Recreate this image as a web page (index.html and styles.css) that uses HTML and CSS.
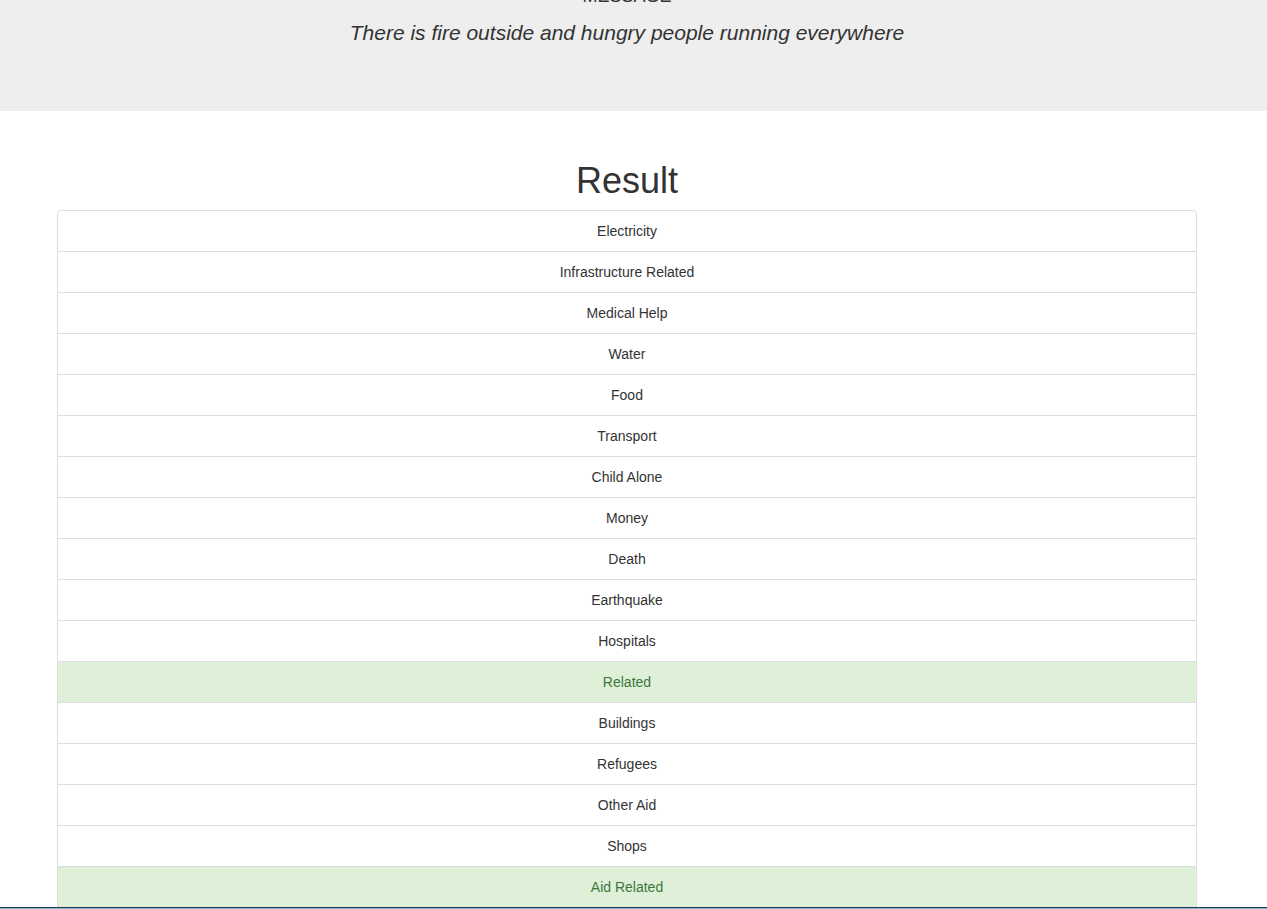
FILE: index.html
```html
<!DOCTYPE html>
<html lang="en">
<head>
<meta charset="utf-8">
<title>Disaster Response</title>
<link rel="stylesheet" href="styles.css">
</head>
<body>
<div class="jumbotron">
  <div class="container">
    <h3 class="msg-label">MESSAGE</h3>
    <p class="msg-text">There is fire outside and hungry people running everywhere</p>
  </div>
</div>
<div class="main">
  <div class="container">
    <h1 class="result-title">Result</h1>
    <ul class="list-group">
      <li class="list-item">Electricity</li>
      <li class="list-item">Infrastructure Related</li>
      <li class="list-item">Medical Help</li>
      <li class="list-item">Water</li>
      <li class="list-item">Food</li>
      <li class="list-item">Transport</li>
      <li class="list-item">Child Alone</li>
      <li class="list-item">Money</li>
      <li class="list-item">Death</li>
      <li class="list-item">Earthquake</li>
      <li class="list-item">Hospitals</li>
      <li class="list-item success">Related</li>
      <li class="list-item">Buildings</li>
      <li class="list-item">Refugees</li>
      <li class="list-item">Other Aid</li>
      <li class="list-item">Shops</li>
      <li class="list-item success">Aid Related</li>
      <li class="list-item">Storm</li>
      <li class="list-item">Fire</li>
    </ul>
  </div>
</div>
<div class="taskbar-edge"></div>
</body>
</html>
```
FILE: styles.css
```css
html, body {
  margin: 0;
  padding: 0;
  background: #fff;
}
body {
  font-family: "Liberation Sans", Arial, Helvetica, sans-serif;
  font-size: 14px;
  line-height: 20px;
  color: #333;
  overflow: hidden;
}
.container {
  width: 1140px;
  margin: 0 auto;
}
.jumbotron {
  background: #eee;
  height: 111px;
  overflow: hidden;
  padding-right: 13px;
}
.main {
  padding-right: 13px;
}
.msg-label {
  margin: 0;
  margin-top: -14px;
  font-size: 18px;
  font-weight: 400;
  line-height: 20px;
  text-align: center;
  color: #333;
}
.msg-text {
  margin: 12px 0 0;
  font-size: 21px;
  font-style: italic;
  line-height: 30px;
  text-align: center;
  color: #333;
}
.result-title {
  margin: 50px 0 9px;
  font-size: 36px;
  font-weight: 500;
  line-height: 40px;
  text-align: center;
  color: #333;
}
.list-group {
  list-style: none;
  margin: 0;
  padding: 0;
}
.list-item {
  padding: 10px 15px;
  margin-bottom: -1px;
  border: 1px solid #ddd;
  background: #fff;
  text-align: center;
}
.list-item:first-child {
  border-top-left-radius: 4px;
  border-top-right-radius: 4px;
}
.list-item.success {
  background: #dff0d8;
  color: #3c763d;
}
.taskbar-edge {
  position: fixed;
  left: 0;
  right: 0;
  bottom: 0;
  height: 1px;
  border-top: 1px solid #1f3a55;
  background: #8fb3cc;
}
```
